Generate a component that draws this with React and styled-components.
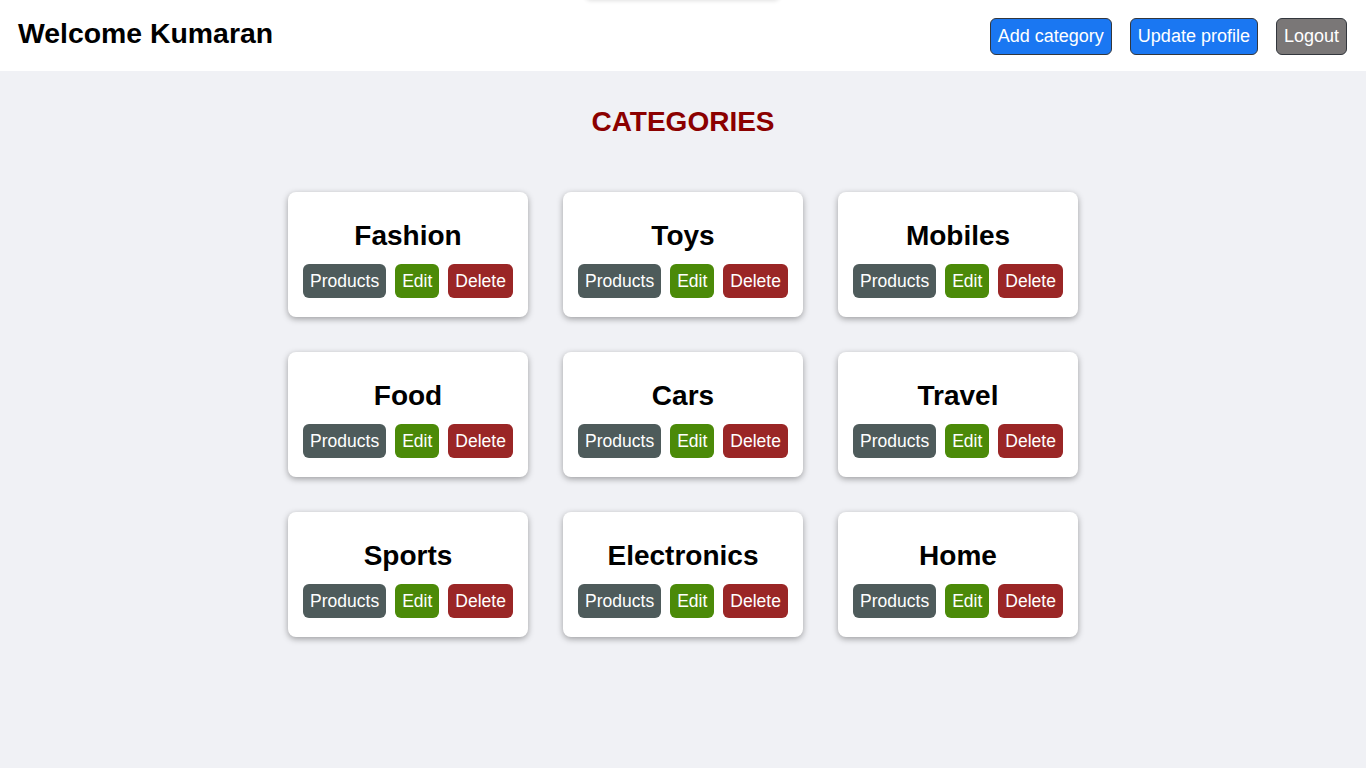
import React from "react";
import styled, { createGlobalStyle } from "styled-components";

const GlobalStyle = createGlobalStyle`
	html, body {
		margin: 0;
		padding: 0;
		background: #f0f1f5;
		font-family: "Liberation Sans", Arial, sans-serif;
	}
`;

const Page = styled.div`
	min-height: 768px;
	background: #f0f1f5;
	position: relative;
	overflow: hidden;
`;

const Toast = styled.div`
	position: absolute;
	top: -40px;
	left: 585px;
	width: 195px;
	height: 40px;
	border-radius: 6px;
	background: #fff;
	box-shadow: 0 1px 4px rgba(0, 0, 0, 0.12);
`;

const Header = styled.header`
	display: flex;
	align-items: center;
	justify-content: space-between;
	height: 71px;
	padding: 0 19px 0 18px;
	background: #ffffff;
`;

const Welcome = styled.h1`
	margin: 0 0 4px;
	font-size: 28.4px;
	font-weight: bold;
	color: #000;
`;

const Actions = styled.div`
	display: flex;
	align-items: center;
	gap: 18px;
	margin-top: 1px;
`;

const NavButton = styled.button`
	height: 37px;
	padding: 0 7px;
	font-family: inherit;
	font-size: 18px;
	color: #fff;
	background: ${(props) => (props.$muted ? "#7a7777" : "#1a77f2")};
	border: 1px solid #33373d;
	border-radius: 6px;
	cursor: pointer;
`;

const Main = styled.main`
	display: flex;
	flex-direction: column;
	align-items: center;
`;

const Heading = styled.h2`
	margin: 0;
	padding: 35px 0 54px;
	line-height: 32px;
	font-size: 28px;
	font-weight: bold;
	color: #8b0000;
`;

const Grid = styled.div`
	display: grid;
	grid-template-columns: repeat(3, 240px);
	gap: 35px;
`;

const Card = styled.div`
	display: flex;
	flex-direction: column;
	align-items: center;
	padding: 28px 14px 19px;
	background: #fff;
	border-radius: 8px;
	box-shadow: 0 2px 6px rgba(0, 0, 0, 0.35);
`;

const CardTitle = styled.h3`
	margin: 0 0 12px;
	line-height: 32px;
	font-size: 28px;
	font-weight: bold;
	color: #000;
`;

const ButtonRow = styled.div`
	display: flex;
	gap: 9px;
`;

const colors = {
	products: "#4e5b5b",
	edit: "#4b8a08",
	delete: "#9a2626",
};

const CardButton = styled.button`
	height: 34px;
	padding: 0 7px;
	font-family: inherit;
	font-size: 17.5px;
	color: #fff;
	background: ${(props) => colors[props.$kind]};
	border: none;
	border-radius: 6px;
	cursor: pointer;
`;

const categories = [
	"Fashion",
	"Toys",
	"Mobiles",
	"Food",
	"Cars",
	"Travel",
	"Sports",
	"Electronics",
	"Home",
];

export default function App() {
	return (
		<Page>
			<GlobalStyle />
			<Toast />
			<Header>
				<Welcome>Welcome Kumaran</Welcome>
				<Actions>
					<NavButton>Add category</NavButton>
					<NavButton>Update profile</NavButton>
					<NavButton $muted>Logout</NavButton>
				</Actions>
			</Header>
			<Main>
				<Heading>CATEGORIES</Heading>
				<Grid>
					{categories.map((name) => (
						<Card key={name}>
							<CardTitle>{name}</CardTitle>
							<ButtonRow>
								<CardButton $kind="products">Products</CardButton>
								<CardButton $kind="edit">Edit</CardButton>
								<CardButton $kind="delete">Delete</CardButton>
							</ButtonRow>
						</Card>
					))}
				</Grid>
			</Main>
		</Page>
	);
}
